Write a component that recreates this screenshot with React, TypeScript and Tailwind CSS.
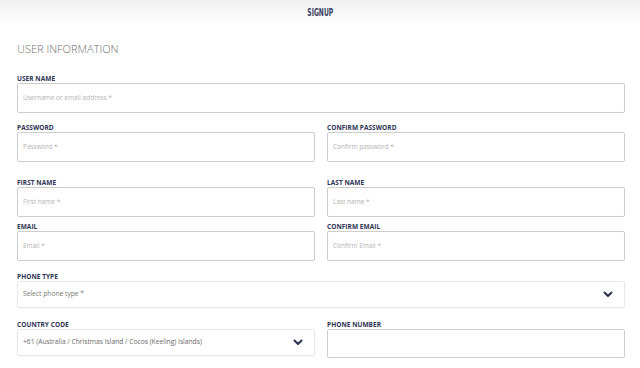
import React from "react";

const Chevron = () => (
  <svg width="10" height="7" viewBox="0 0 10 7" className="shrink-0">
    <polyline points="1.5,1.5 5,5 8.5,1.5" fill="none" stroke="#2b3252" strokeWidth="2" strokeLinecap="round" strokeLinejoin="round" />
  </svg>
);

const Label = ({ children }: { children: React.ReactNode }) => (
  <div className="h-[9px] leading-[9px] text-[6.5px] font-bold uppercase text-[#2d3354] tracking-[0.05px]" style={{ fontFamily: '"Open Sans", sans-serif' }}>
    {children}
  </div>
);

const Input = ({ placeholder, h = "h-[30px]" }: { placeholder?: string; h?: string }) => (
  <div className={`${h} border border-[#cdcdcd] rounded-[2px] flex items-center px-[5px] text-[6.5px] text-[#b3b3b3] bg-white`}>
    {placeholder}
  </div>
);

const Select = ({ text, color = "text-[#777]" }: { text: string; color?: string }) => (
  <div className={`h-[27px] border border-[#e8e8e8] rounded-[2px] flex items-center justify-between pl-[5px] pr-[11px] text-[6.7px] ${color} bg-white shadow-[0_1px_2px_rgba(0,0,0,0.04)]`}>
    <span>{text}</span>
    <Chevron />
  </div>
);

export default function App() {
  return (
    <div className="w-[640px] h-[368px] bg-white overflow-hidden" style={{ fontFamily: '"Open Sans", sans-serif' }}>
      <div className="h-[25px] bg-gradient-to-b from-[#f1f1f1] to-white flex items-center justify-center">
        <span className="text-[10.5px] font-bold text-[#3b4163] scale-x-[0.64]" style={{ fontFamily: '"DejaVu Sans Condensed", "DejaVu Sans", sans-serif' }}>
          SIGNUP
        </span>
      </div>
      <div className="pl-[17px] pr-[15px]">
        <div className="mt-[16px] h-[16px] leading-[16px] text-[11px] font-light text-[#6f6f6f]">USER INFORMATION</div>

        <div className="mt-[17px]">
          <Label>User Name</Label>
          <Input placeholder="Username or email address *" />
        </div>

        <div className="mt-[10px] grid grid-cols-2 gap-x-[12px]">
          <div>
            <Label>Password</Label>
            <Input placeholder="Password *" />
          </div>
          <div>
            <Label>Confirm Password</Label>
            <Input placeholder="Confirm password *" />
          </div>
        </div>

        <div className="mt-[16px] grid grid-cols-2 gap-x-[12px]">
          <div>
            <Label>First Name</Label>
            <Input placeholder="First name *" />
          </div>
          <div>
            <Label>Last Name</Label>
            <Input placeholder="Last name *" />
          </div>
        </div>

        <div className="mt-[5px] grid grid-cols-2 gap-x-[12px]">
          <div>
            <Label>Email</Label>
            <Input placeholder="Email *" />
          </div>
          <div>
            <Label>Confirm Email</Label>
            <Input placeholder="Confirm Email *" />
          </div>
        </div>

        <div className="mt-[11px]">
          <Label>Phone Type</Label>
          <Select text="Select phone type *" />
        </div>

        <div className="mt-[12px] grid grid-cols-2 gap-x-[12px]">
          <div>
            <Label>Country Code</Label>
            <Select text="+61 (Australia / Christmas Island / Cocos (Keeling) Islands)" color="text-[#6a6a6a]" />
          </div>
          <div>
            <Label>Phone Number</Label>
            <Input h="h-[29px]" />
          </div>
        </div>
      </div>
    </div>
  );
}
